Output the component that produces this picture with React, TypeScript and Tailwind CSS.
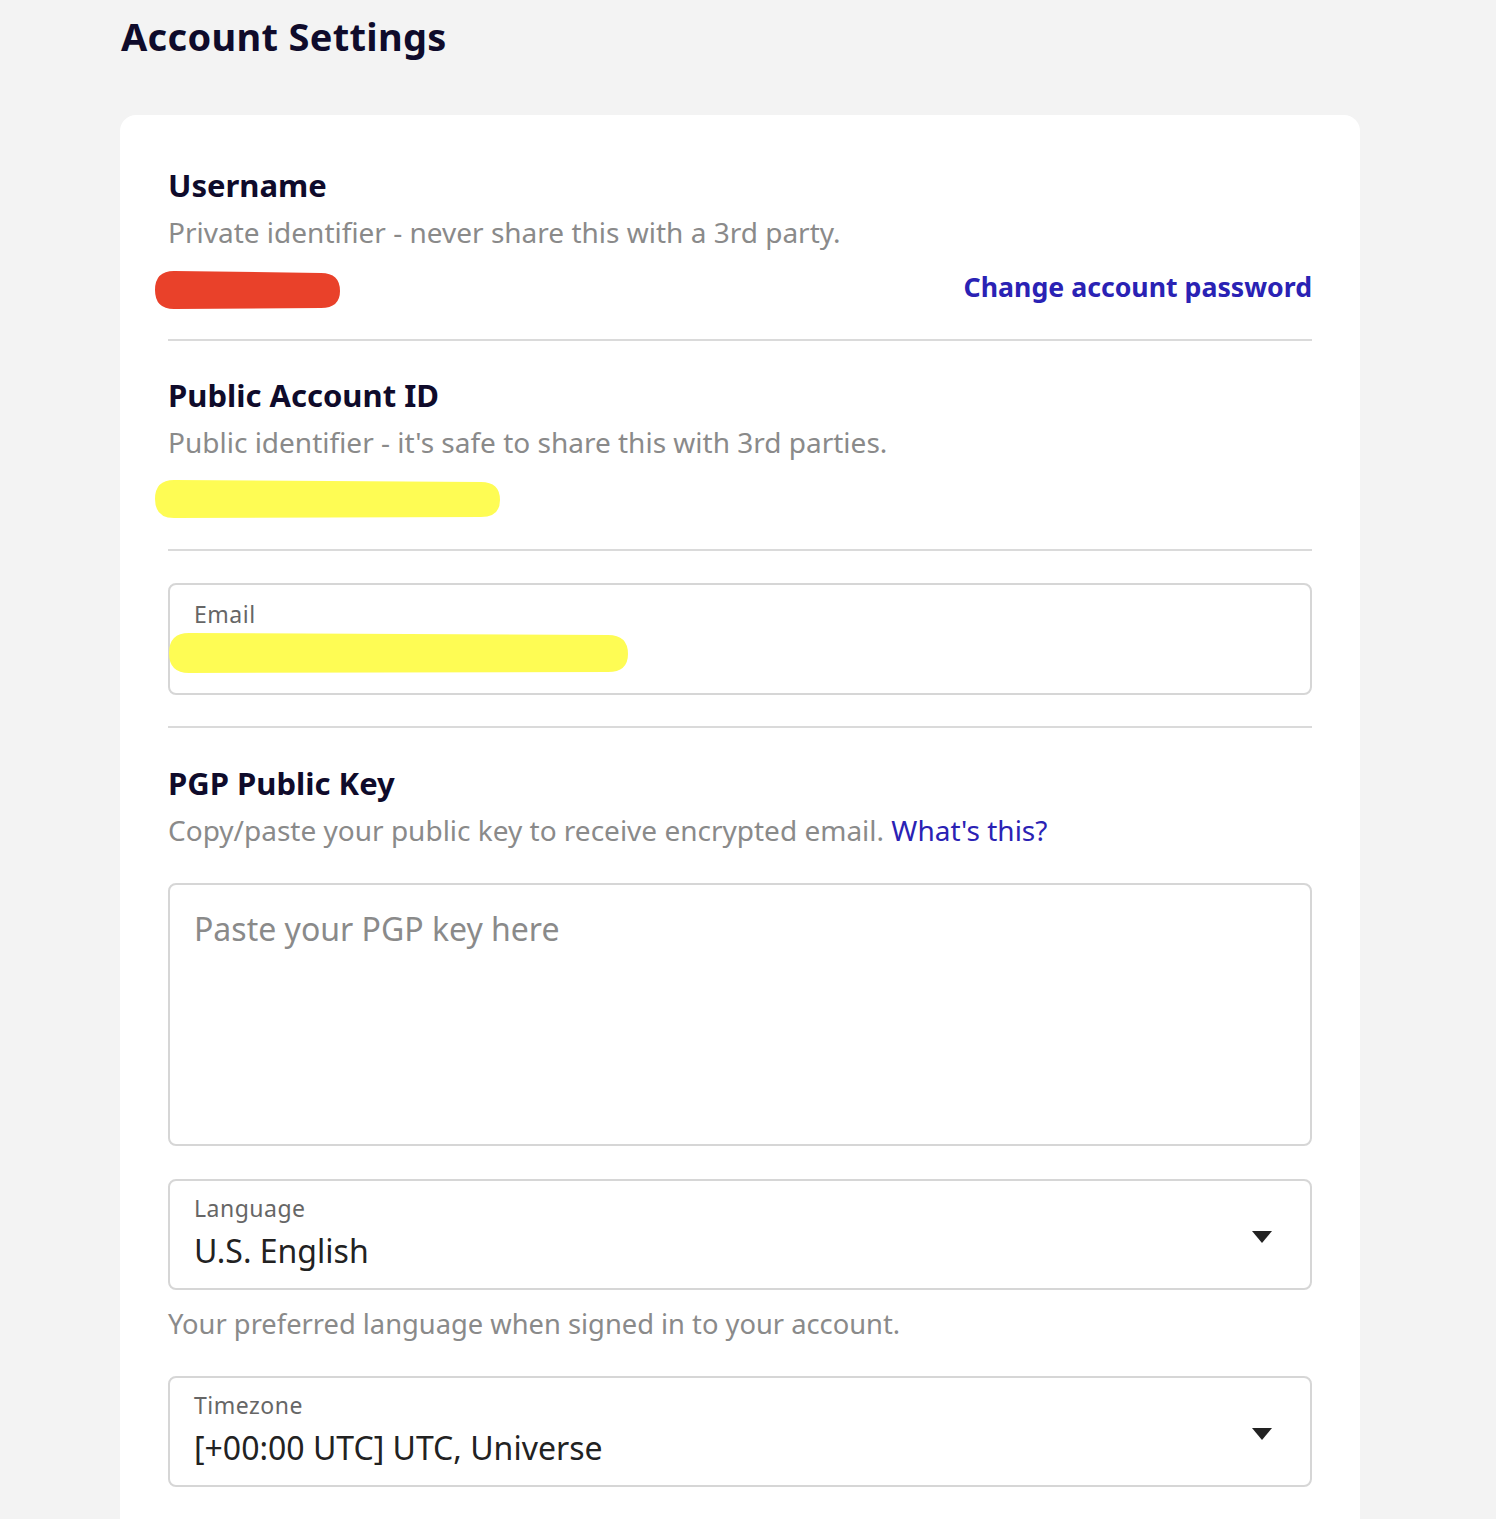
const font = { fontFamily: '"Noto Sans", "Open Sans", sans-serif' };

function Scribble({ width, height, color }: { width: number; height: number; color: string }) {
  const r = height / 2;
  return (
    <svg width={width} height={height} viewBox={`0 0 ${width} ${height}`} className="block">
      <path
        d={`M ${r} 1 L ${width - r} 3 Q ${width - 1} 3 ${width - 1} ${r + 1} Q ${width - 1} ${height - 2} ${width - r} ${height - 2} L ${r} ${height - 1} Q 1 ${height - 1} 1 ${r} Q 1 1 ${r} 1 Z`}
        fill={color}
      />
    </svg>
  );
}

function SelectBox({ label, value }: { label: string; value: string }) {
  return (
    <div className="flex justify-between rounded-lg border-2 border-[#d6d6d6] pl-6 pr-[38px] h-[111px]">
      <div className="flex flex-col pt-[13px]">
        <span className="text-[23px] leading-7 text-[#666666] tracking-[0.5px]">{label}</span>
        <span className="text-[32px] leading-[44px] text-[#222222] mt-[7px]">{value}</span>
      </div>
      <div className="self-center mt-1 w-0 h-0 border-l-[10px] border-r-[10px] border-t-[12px] border-l-transparent border-r-transparent border-t-[#222222]" />
    </div>
  );
}

export default function App() {
  return (
    <div style={font} className="min-h-screen bg-[#f3f3f3] pl-[120px] pr-[136px] pt-[10px]">
      <h1 className="text-[38px] font-bold text-[#0f0b2b] leading-[52px] pl-px tracking-[0.3px]">Account Settings</h1>

      <div className="mt-[53px] bg-white rounded-t-2xl px-12 pt-[50px] pb-20">
        {/* Username */}
        <div className="pb-[28px] border-b-2 border-[#dadada]">
          <div className="text-[31px] font-bold text-[#0f0b2b] leading-10">Username</div>
          <div className="text-[28px] text-[#8a8a8a] leading-9 mt-[9px]">Private identifier - never share this with a 3rd party.</div>
          <div className="flex items-center justify-between mt-[19px]">
            <div className="-ml-[14px]">
              <Scribble width={187} height={40} color="#e9412a" />
            </div>
            <a className="text-[26.7px] font-bold text-[#2a22b4] leading-9 mb-[6px] cursor-pointer">Change account password</a>
          </div>
        </div>

        {/* Public Account ID */}
        <div className="pt-[34px] pb-[30px] border-b-2 border-[#dadada]">
          <div className="text-[31px] font-bold text-[#0f0b2b] leading-10">Public Account ID</div>
          <div className="text-[28px] text-[#8a8a8a] leading-9 mt-[9px]">Public identifier - it's safe to share this with 3rd parties.</div>
          <div className="-ml-[14px] mt-[19px]">
            <Scribble width={347} height={40} color="#fefc54" />
          </div>
        </div>

        {/* Email */}
        <div className="pt-8 pb-[31px] border-b-2 border-[#dadada]">
          <div className="relative h-[112px] rounded-lg border-2 border-[#d6d6d6] pl-6 pt-[15px]">
            <span className="text-[23px] leading-7 text-[#666666] tracking-[0.5px]">Email</span>
            <div className="absolute left-[-2px] top-[47px]">
              <Scribble width={461} height={42} color="#fefc54" />
            </div>
          </div>
        </div>

        {/* PGP */}
        <div className="pt-[35px]">
          <div className="text-[31px] font-bold text-[#0f0b2b] leading-10">PGP Public Key</div>
          <div className="text-[28px] text-[#8a8a8a] leading-9 mt-[9px]">
            Copy/paste your public key to receive encrypted email.{' '}
            <a className="text-[#2a22b4] cursor-pointer">What's this?</a>
          </div>
          <textarea
            placeholder="Paste your PGP key here"
            className="mt-[35px] block w-full h-[263px] rounded-lg border-2 border-[#d6d6d6] px-6 pt-[24px] text-[32px] leading-10 text-[#222] placeholder-[#8a8a8a] resize-none outline-none"
          />
        </div>

        {/* Language */}
        <div className="mt-[33px]">
          <SelectBox label="Language" value="U.S. English" />
          <div className="text-[27.3px] text-[#8a8a8a] leading-9 mt-[16px]">Your preferred language when signed in to your account.</div>
        </div>

        {/* Timezone */}
        <div className="mt-[34px]">
          <SelectBox label="Timezone" value="[+00:00 UTC] UTC, Universe" />
        </div>
      </div>
    </div>
  );
}
